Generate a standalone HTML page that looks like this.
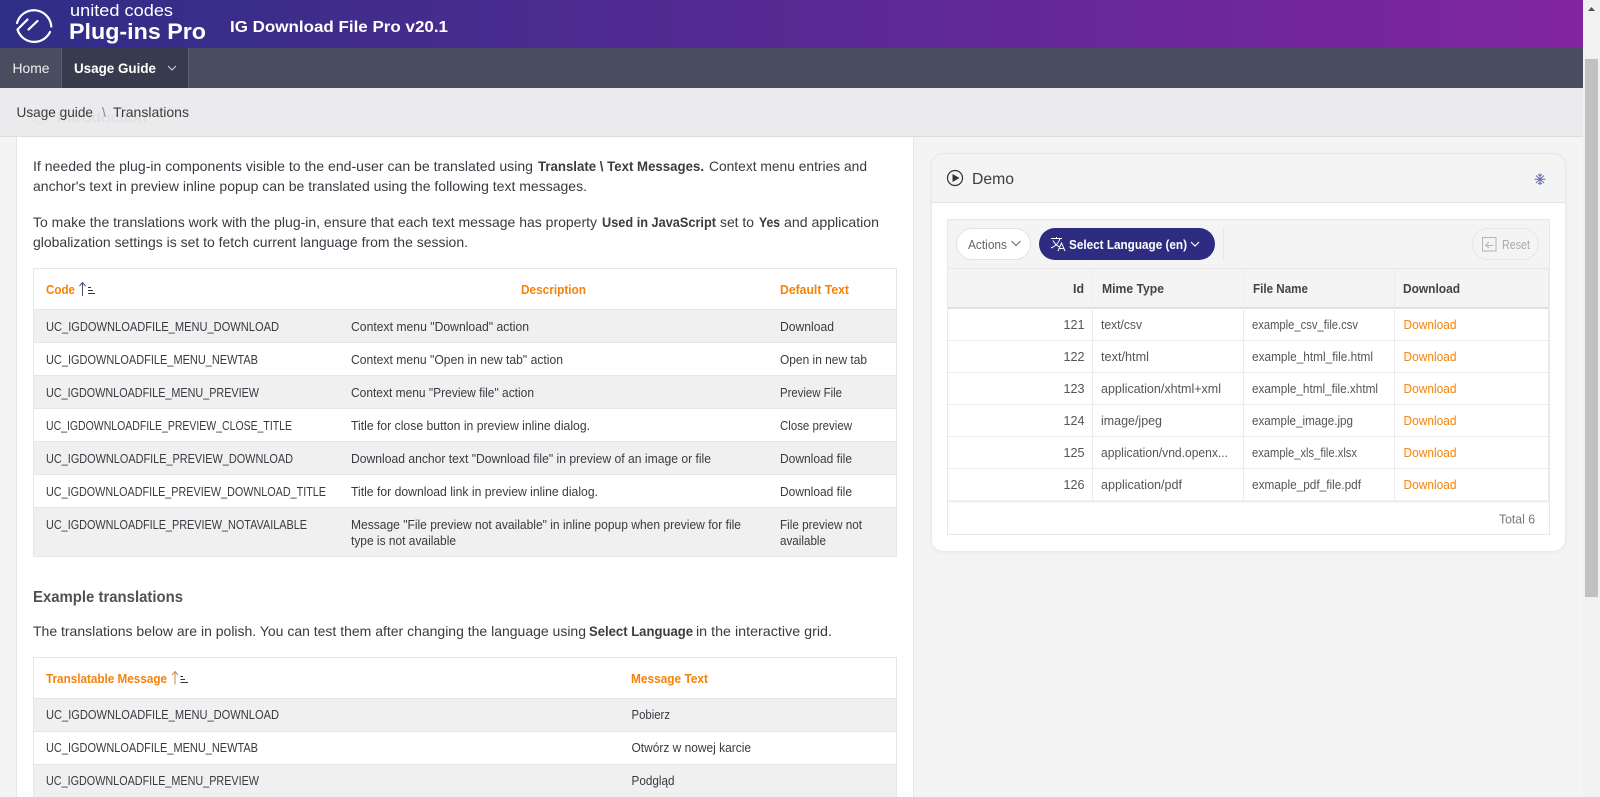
<!DOCTYPE html>
<html lang="en"><head><meta charset="utf-8"><title>IG Download File Pro v20.1</title>
<style>
html,body{margin:0;padding:0;width:1600px;height:797px;overflow:hidden;background:#f4f4f4}
svg{display:block;position:absolute;left:0;top:0}
text{font-family:"Liberation Sans",sans-serif;white-space:pre}
.t12{font-size:12.5px;fill:#3a3a42}
.p{font-size:14px;fill:#3a3a42}
.b{font-size:14px;font-weight:bold;fill:#3c3c3c}
.o{font-size:12.5px;font-weight:bold;fill:#f5820a}
.g{font-size:12.5px;fill:#555}
.h{font-size:12.5px;font-weight:bold;fill:#444}
.d{font-size:12.5px;fill:#f5820a}
</style></head><body>
<svg width="1600" height="797" viewBox="0 0 1600 797" xmlns="http://www.w3.org/2000/svg">
<defs><linearGradient id="hg" x1="0" x2="1" y1="0" y2="0"><stop offset="0" stop-color="#2e2e86"/><stop offset="1" stop-color="#81259f"/></linearGradient>
<filter id="sh" x="-2%" y="-2%" width="104%" height="104%"><feDropShadow dx="0" dy="1" stdDeviation="1.5" flood-color="#000" flood-opacity=".04"/></filter></defs>

<rect x="0" y="0" width="1600" height="797" fill="#f4f4f4"/>
<!-- left panel -->
<rect x="16.5" y="130" width="897" height="680" fill="#fff" stroke="#e6e6e6"/>

<!-- paragraphs -->
<text class="p" x="33" y="171" textLength="500" lengthAdjust="spacingAndGlyphs">If needed the plug-in components visible to the end-user can be translated using</text>
<text class="b" x="538" y="171" textLength="166" lengthAdjust="spacingAndGlyphs">Translate \ Text Messages.</text>
<text class="p" x="709" y="171" textLength="158" lengthAdjust="spacingAndGlyphs">Context menu entries and</text>
<text class="p" x="33" y="191" textLength="554" lengthAdjust="spacingAndGlyphs">anchor's text in preview inline popup can be translated using the following text messages.</text>
<text class="p" x="33" y="227" textLength="564" lengthAdjust="spacingAndGlyphs">To make the translations work with the plug-in, ensure that each text message has property</text>
<text class="b" x="602" y="227" textLength="114" lengthAdjust="spacingAndGlyphs">Used in JavaScript</text>
<text class="p" x="720" y="227" textLength="34" lengthAdjust="spacingAndGlyphs">set to</text>
<text class="b" x="759" y="227" textLength="21" lengthAdjust="spacingAndGlyphs">Yes</text>
<text class="p" x="784" y="227" textLength="95" lengthAdjust="spacingAndGlyphs">and application</text>
<text class="p" x="33" y="247" textLength="435" lengthAdjust="spacingAndGlyphs">globalization settings is set to fetch current language from the session.</text>

<!-- table 1 -->
<rect x="33.5" y="268.5" width="863" height="288" fill="#fff" stroke="#e6e6e6"/>
<rect x="34" y="310" width="862" height="32" fill="#f0f0f0"/>
<rect x="34" y="376" width="862" height="32" fill="#f0f0f0"/>
<rect x="34" y="442" width="862" height="32" fill="#f0f0f0"/>
<rect x="34" y="508" width="862" height="48" fill="#f0f0f0"/>
<g stroke="#e6e6e6"><path d="M33 309.5H897M33 342.5H897M33 375.5H897M33 408.5H897M33 441.5H897M33 474.5H897M33 507.5H897"/></g>
<text class="o" x="46" y="294" textLength="29" lengthAdjust="spacingAndGlyphs">Code</text>
<path d="M82.5 296V283M79.5 286L82.5 282.5L85.5 286" fill="none" stroke="#4a4a6a" stroke-width="1"/>
<path d="M88 287.5H91M88 290.5H93M88 293.5H95" stroke="#333" stroke-width="1" fill="none"/>
<text class="o" x="521" y="294" textLength="65" lengthAdjust="spacingAndGlyphs">Description</text>
<text class="o" x="780" y="294" textLength="69" lengthAdjust="spacingAndGlyphs">Default Text</text>

<text class="t12" x="46" y="331" textLength="233" lengthAdjust="spacingAndGlyphs">UC_IGDOWNLOADFILE_MENU_DOWNLOAD</text>
<text class="t12" x="351" y="331" textLength="178" lengthAdjust="spacingAndGlyphs">Context menu "Download" action</text>
<text class="t12" x="780" y="331" textLength="54" lengthAdjust="spacingAndGlyphs">Download</text>
<text class="t12" x="46" y="364" textLength="212" lengthAdjust="spacingAndGlyphs">UC_IGDOWNLOADFILE_MENU_NEWTAB</text>
<text class="t12" x="351" y="364" textLength="212" lengthAdjust="spacingAndGlyphs">Context menu "Open in new tab" action</text>
<text class="t12" x="780" y="364" textLength="87" lengthAdjust="spacingAndGlyphs">Open in new tab</text>
<text class="t12" x="46" y="397" textLength="213" lengthAdjust="spacingAndGlyphs">UC_IGDOWNLOADFILE_MENU_PREVIEW</text>
<text class="t12" x="351" y="397" textLength="183" lengthAdjust="spacingAndGlyphs">Context menu "Preview file" action</text>
<text class="t12" x="780" y="397" textLength="62" lengthAdjust="spacingAndGlyphs">Preview File</text>
<text class="t12" x="46" y="430" textLength="246" lengthAdjust="spacingAndGlyphs">UC_IGDOWNLOADFILE_PREVIEW_CLOSE_TITLE</text>
<text class="t12" x="351" y="430" textLength="239" lengthAdjust="spacingAndGlyphs">Title for close button in preview inline dialog.</text>
<text class="t12" x="780" y="430" textLength="72" lengthAdjust="spacingAndGlyphs">Close preview</text>
<text class="t12" x="46" y="463" textLength="247" lengthAdjust="spacingAndGlyphs">UC_IGDOWNLOADFILE_PREVIEW_DOWNLOAD</text>
<text class="t12" x="351" y="463" textLength="360" lengthAdjust="spacingAndGlyphs">Download anchor text "Download file" in preview of an image or file</text>
<text class="t12" x="780" y="463" textLength="72" lengthAdjust="spacingAndGlyphs">Download file</text>
<text class="t12" x="46" y="496" textLength="280" lengthAdjust="spacingAndGlyphs">UC_IGDOWNLOADFILE_PREVIEW_DOWNLOAD_TITLE</text>
<text class="t12" x="351" y="496" textLength="247" lengthAdjust="spacingAndGlyphs">Title for download link in preview inline dialog.</text>
<text class="t12" x="780" y="496" textLength="72" lengthAdjust="spacingAndGlyphs">Download file</text>
<text class="t12" x="46" y="529" textLength="261" lengthAdjust="spacingAndGlyphs">UC_IGDOWNLOADFILE_PREVIEW_NOTAVAILABLE</text>
<text class="t12" x="351" y="529" textLength="390" lengthAdjust="spacingAndGlyphs">Message "File preview not available" in inline popup when preview for file</text>
<text class="t12" x="351" y="545" textLength="105" lengthAdjust="spacingAndGlyphs">type is not available</text>
<text class="t12" x="780" y="529" textLength="82" lengthAdjust="spacingAndGlyphs">File preview not</text>
<text class="t12" x="780" y="545" textLength="46" lengthAdjust="spacingAndGlyphs">available</text>

<text x="33" y="602" textLength="150" lengthAdjust="spacingAndGlyphs" style="font-size:16px;fill:#333;font-weight:bold" opacity=".85">Example translations</text>
<text class="p" x="33" y="636" textLength="553" lengthAdjust="spacingAndGlyphs">The translations below are in polish. You can test them after changing the language using</text>
<text class="b" x="589" y="636" textLength="104" lengthAdjust="spacingAndGlyphs">Select Language</text>
<text class="p" x="696" y="636" textLength="136" lengthAdjust="spacingAndGlyphs">in the interactive grid.</text>

<!-- table 2 -->
<rect x="33.5" y="657.5" width="863" height="160" fill="#fff" stroke="#e6e6e6"/>
<rect x="34" y="699" width="862" height="32" fill="#f0f0f0"/>
<rect x="34" y="765" width="862" height="32" fill="#f0f0f0"/>
<path d="M33 698.5H897M33 731.5H897M33 764.5H897" stroke="#e6e6e6"/>
<text class="o" x="46" y="683" textLength="121" lengthAdjust="spacingAndGlyphs">Translatable Message</text>
<path d="M175 684.5V672M172 675L175 671.5L178 675" fill="none" stroke="#c98a4a" stroke-width="1"/>
<path d="M180.500 676.500H183M180.500 679.500H185M180.500 682.500H188" stroke="#333" stroke-width="1" fill="none"/>
<text class="o" x="631" y="683" textLength="77" lengthAdjust="spacingAndGlyphs">Message Text</text>
<text class="t12" x="46" y="719" textLength="233" lengthAdjust="spacingAndGlyphs">UC_IGDOWNLOADFILE_MENU_DOWNLOAD</text>
<text class="t12" x="631.500" y="719" textLength="38.500" lengthAdjust="spacingAndGlyphs">Pobierz</text>
<text class="t12" x="46" y="752" textLength="212" lengthAdjust="spacingAndGlyphs">UC_IGDOWNLOADFILE_MENU_NEWTAB</text>
<text class="t12" x="631.500" y="752" textLength="119.500" lengthAdjust="spacingAndGlyphs">Otwórz w nowej karcie</text>
<text class="t12" x="46" y="785" textLength="213" lengthAdjust="spacingAndGlyphs">UC_IGDOWNLOADFILE_MENU_PREVIEW</text>
<text class="t12" x="631.500" y="785" textLength="43" lengthAdjust="spacingAndGlyphs">Podgląd</text>

<!-- demo card -->
<rect x="931.5" y="153.500" width="634" height="398" rx="12" fill="#fff" stroke="#e9e9e9" filter="url(#sh)"/>
<path d="M931.500 202V165.500A12 12 0 0 1 943.500 153.500H1553.500A12 12 0 0 1 1565.500 165.500V202Z" fill="#f4f4f4"/>
<path d="M943.500 153.500H1553.500A12 12 0 0 1 1565.500 165.500V202M931.500 202V165.500A12 12 0 0 1 943.500 153.500" fill="none" stroke="#e8e8e8"/>
<path d="M931 202.500H1566" stroke="#e3e3e3"/>
<circle cx="955" cy="178" r="7.500" fill="none" stroke="#333" stroke-width="1.200"/>
<path d="M952.500 174L959.500 178L952.500 182Z" fill="#333"/>
<text x="972" y="184" textLength="42" lengthAdjust="spacingAndGlyphs" style="font-size:16px;fill:#3c3c3c">Demo</text>
<g stroke="#6a6ab4" stroke-width="1" fill="none"><path d="M1540 173.500V185M1534.500 179.200H1545.500M1536 175.500L1544 183M1544 175.500L1536 183M1538 174.500L1540 176L1542 174.500M1538 184L1540 182.500L1542 184"/></g>

<!-- grid -->
<rect x="947.500" y="219.500" width="602" height="315" fill="#fff" stroke="#e8e8e8"/>
<rect x="948" y="220" width="601" height="88" fill="#f4f4f4"/>
<path d="M948 268.500H1549" stroke="#e8e8e8"/>
<path d="M948 308H1548" stroke="#d8d8d8" stroke-width="1.500"/>
<path d="M1223.500 228V260" stroke="#e6e6e6"/>
<rect x="956.500" y="228.500" width="74" height="31" rx="15.500" fill="#fff" stroke="#e2e2e2"/>
<text x="968" y="249" textLength="39" lengthAdjust="spacingAndGlyphs" style="font-size:12.5px;fill:#666">Actions</text>
<path d="M1011.500 241L1016 245.500L1020.500 241" fill="none" stroke="#666"/>
<rect x="1039" y="228" width="176" height="32" rx="16" fill="#2d2c80"/>
<path d="M1051 238.500H1062M1056.500 237V238.500M1060 238.500C1059 242 1056 246 1051 248M1053 240.500C1054.500 243.500 1057 246 1060 247M1058 251L1061.500 243L1065 251M1059.200 248.500H1063.800" fill="none" stroke="#fff" stroke-width="1"/>
<text x="1069" y="249" textLength="118" lengthAdjust="spacingAndGlyphs" style="font-size:12.5px;font-weight:bold;fill:#fff">Select Language (en)</text>
<path d="M1191 242L1195 246L1199 242" fill="none" stroke="#fff" stroke-width="1.200"/>
<rect x="1472.500" y="228.500" width="66" height="31" rx="15.500" fill="#f4f4f4" stroke="#e8e8e8"/>
<path d="M1482.500 237.500H1496V251H1482.500ZM1493.500 245.500H1486M1489 242L1485.500 245L1489 248" fill="none" stroke="#b4b4b4"/>
<text x="1502" y="249" textLength="28" lengthAdjust="spacingAndGlyphs" style="font-size:12.5px;fill:#aaa">Reset</text>

<text class="h" x="1073" y="293" textLength="11" lengthAdjust="spacingAndGlyphs">Id</text>
<text class="h" x="1102" y="293" textLength="62" lengthAdjust="spacingAndGlyphs">Mime Type</text>
<text class="h" x="1253" y="293" textLength="55" lengthAdjust="spacingAndGlyphs">File Name</text>
<text class="h" x="1403" y="293" textLength="57" lengthAdjust="spacingAndGlyphs">Download</text>

<path d="M1092.500 268V500M1243.500 268V500M1394.500 268V500M1548.500 268V500" stroke="#ececec"/>
<path d="M948 340.500H1548M948 372.500H1548M948 404.500H1548M948 436.500H1548M948 468.500H1548" stroke="#ececec"/>
<rect x="948" y="500" width="601" height="2.500" fill="#eee"/>

<g>
<text class="g" x="1063.500" y="329" textLength="21" lengthAdjust="spacingAndGlyphs">121</text>
<text class="g" x="1101" y="329" textLength="41" lengthAdjust="spacingAndGlyphs">text/csv</text>
<text class="g" x="1252" y="329" textLength="106" lengthAdjust="spacingAndGlyphs">example_csv_file.csv</text>
<text class="d" x="1403.500" y="329" textLength="53" lengthAdjust="spacingAndGlyphs">Download</text>
<text class="g" x="1063.500" y="361" textLength="21" lengthAdjust="spacingAndGlyphs">122</text>
<text class="g" x="1101" y="361" textLength="48" lengthAdjust="spacingAndGlyphs">text/html</text>
<text class="g" x="1252" y="361" textLength="121" lengthAdjust="spacingAndGlyphs">example_html_file.html</text>
<text class="d" x="1403.500" y="361" textLength="53" lengthAdjust="spacingAndGlyphs">Download</text>
<text class="g" x="1063.500" y="393" textLength="21" lengthAdjust="spacingAndGlyphs">123</text>
<text class="g" x="1101" y="393" textLength="120" lengthAdjust="spacingAndGlyphs">application/xhtml+xml</text>
<text class="g" x="1252" y="393" textLength="126" lengthAdjust="spacingAndGlyphs">example_html_file.xhtml</text>
<text class="d" x="1403.500" y="393" textLength="53" lengthAdjust="spacingAndGlyphs">Download</text>
<text class="g" x="1063.500" y="425" textLength="21" lengthAdjust="spacingAndGlyphs">124</text>
<text class="g" x="1101" y="425" textLength="61" lengthAdjust="spacingAndGlyphs">image/jpeg</text>
<text class="g" x="1252" y="425" textLength="101" lengthAdjust="spacingAndGlyphs">example_image.jpg</text>
<text class="d" x="1403.500" y="425" textLength="53" lengthAdjust="spacingAndGlyphs">Download</text>
<text class="g" x="1063.500" y="457" textLength="21" lengthAdjust="spacingAndGlyphs">125</text>
<text class="g" x="1101" y="457" textLength="127" lengthAdjust="spacingAndGlyphs">application/vnd.openx...</text>
<text class="g" x="1252" y="457" textLength="105" lengthAdjust="spacingAndGlyphs">example_xls_file.xlsx</text>
<text class="d" x="1403.500" y="457" textLength="53" lengthAdjust="spacingAndGlyphs">Download</text>
<text class="g" x="1063.500" y="489" textLength="21" lengthAdjust="spacingAndGlyphs">126</text>
<text class="g" x="1101" y="489" textLength="81" lengthAdjust="spacingAndGlyphs">application/pdf</text>
<text class="g" x="1252" y="489" textLength="109" lengthAdjust="spacingAndGlyphs">exmaple_pdf_file.pdf</text>
<text class="d" x="1403.500" y="489" textLength="53" lengthAdjust="spacingAndGlyphs">Download</text>
</g>
<text x="1499" y="523.500" textLength="36" lengthAdjust="spacingAndGlyphs" style="font-size:12.5px;fill:#777">Total 6</text>

<!-- breadcrumb -->
<rect x="0" y="88" width="1583" height="48" fill="#ebebed"/>
<path d="M0 136.500H1583" stroke="#dcdcdc"/>
<circle cx="41" cy="118" r="6" fill="none" stroke="#e2e2e4"/>
<text x="57" y="122" textLength="90" lengthAdjust="spacingAndGlyphs" style="font-size:14px;fill:#dedee0">Introduction</text>
<text x="16.500" y="117" textLength="76.500" lengthAdjust="spacingAndGlyphs" style="font-size:14px;fill:#3c3c3c">Usage guide</text>
<text x="102" y="117" style="font-size:14px;fill:#888">\</text>
<text x="113" y="117" textLength="76" lengthAdjust="spacingAndGlyphs" style="font-size:14px;fill:#3c3c3c">Translations</text>

<!-- nav -->
<rect x="0" y="48" width="1583" height="40" fill="#4a4d5f"/>
<rect x="62" y="48" width="126" height="40" fill="#383a4e"/>
<path d="M61.500 48V88M188.500 48V88" stroke="#5c5f70"/>
<text x="12.500" y="73" textLength="37" lengthAdjust="spacingAndGlyphs" style="font-size:14px;fill:#f0f0f0">Home</text>
<text x="74" y="73" textLength="82" lengthAdjust="spacingAndGlyphs" style="font-size:14px;font-weight:bold;fill:#fff">Usage Guide</text>
<path d="M168 66L172 70L176 66" fill="none" stroke="#c8c8d0" stroke-width="1.200"/>

<!-- header -->
<rect x="0" y="0" width="1583" height="48" fill="url(#hg)"/>
<g fill="none" stroke="#fff" stroke-width="2.200" stroke-linecap="round">
<path d="M17 23A17.500 17.500 0 0 1 51.300 26.500"/>
<path d="M27.500 19.500L17.500 29.500A17.500 17.500 0 0 0 50 32"/>
<path d="M28.500 29.500L37.500 21"/>
</g>
<text x="70" y="16" textLength="103" lengthAdjust="spacingAndGlyphs" style="font-size:17px;fill:#fff">united codes</text>
<text x="69" y="39" textLength="137" lengthAdjust="spacingAndGlyphs" style="font-size:22px;font-weight:bold;fill:#fff">Plug-ins Pro</text>
<text x="230" y="32" textLength="218" lengthAdjust="spacingAndGlyphs" style="font-size:16px;font-weight:bold;fill:#fff">IG Download File Pro v20.1</text>

<!-- scrollbar -->
<rect x="1583" y="0" width="17" height="797" fill="#f1f1f1"/>
<rect x="1585" y="59" width="13" height="538" fill="#c1c1c1"/>
<path d="M1591.500 7L1595 11H1588Z" fill="#505050"/>
</svg>
</body></html>
